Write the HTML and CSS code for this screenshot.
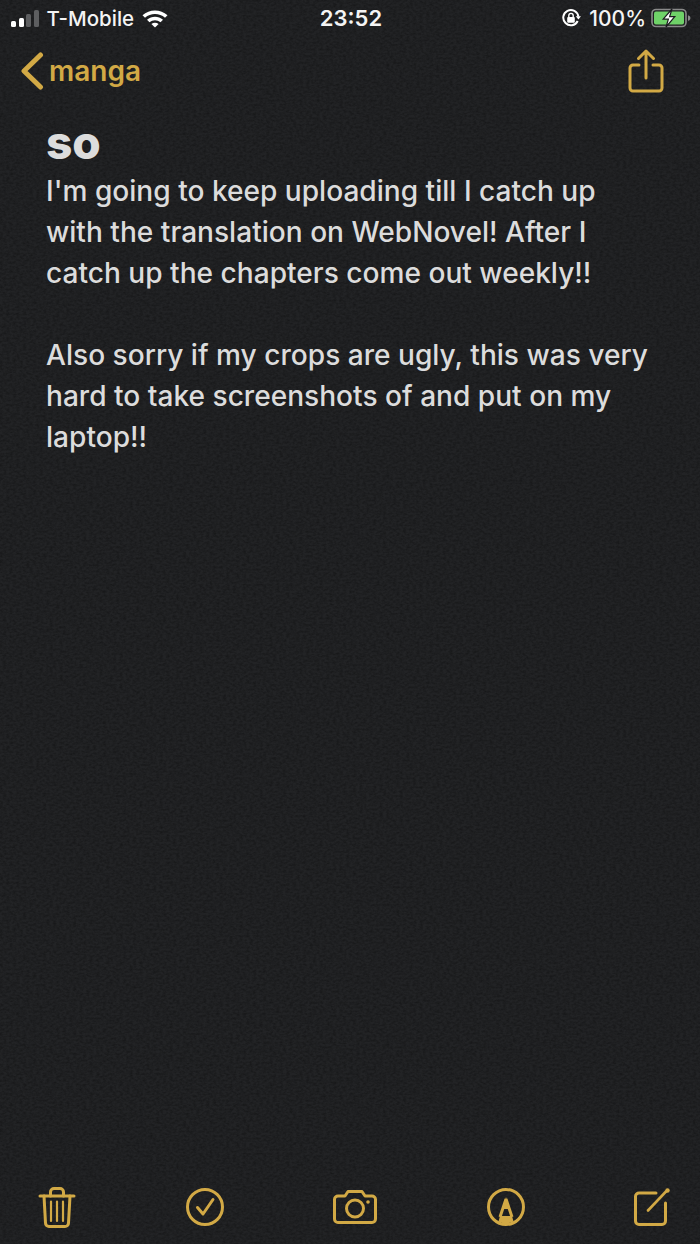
FILE: index.html
```html
<!DOCTYPE html>
<html lang="en">

<head>
	<meta charset="UTF-8">
	<title>so</title>
	<link rel="stylesheet" href="styles.css">
</head>

<body>
	<!-- paper grain behind everything -->
	<svg class="grain" width="700" height="1244" aria-hidden="true">
		<filter id="paper">
			<feTurbulence type="fractalNoise" baseFrequency="0.3 0.45" numOctaves="3" seed="4"/>
			<feColorMatrix type="matrix" values="0 0 0 0 0  0 0 0 0 0  0 0 0 0 0  0.55 0 0 0 -0.17"/>
		</filter>
		<rect width="700" height="1244" filter="url(#paper)"/>
	</svg>

	<div class="phone">
		<!-- status bar -->
		<header class="status">
			<div class="status-left">
				<div class="signal">
					<i class="bar bar1"></i>
					<i class="bar bar2"></i>
					<i class="bar bar3 off"></i>
					<i class="bar bar4 off"></i>
				</div>
				<span class="carrier">T-Mobile</span>
				<svg class="wifi" width="28" height="20" viewBox="0 0 28 20">
					<path d="M1.5 7.2C8.4 .9 19.6 .9 26.5 7.2L24 9.8C18.4 4.8 9.6 4.8 4 9.8Z" fill="#fff"/>
					<path d="M6 11.7C10.7 7.6 17.3 7.6 22 11.7L19.5 14.2C16.2 11.5 11.8 11.5 8.5 14.2Z" fill="#fff"/>
					<path d="M10.4 16C12.6 14.4 15.4 14.4 17.6 16L14 19.6Z" fill="#fff"/>
				</svg>
			</div>
			<div class="clock">23:52</div>
			<div class="status-right">
				<svg class="lock" width="20" height="20" viewBox="0 0 20 20">
					<path d="M16.7 13A7.6 7.6 0 1 1 17.4 8.6" fill="none" stroke="#fff" stroke-width="2"/>
					<path d="M14.8 8.2H20L17.4 11.4Z" fill="#fff"/>
					<rect x="6.2" y="9" width="7.6" height="5.8" rx="1" fill="#fff"/>
					<path d="M7.8 9V7.6A2.2 2.2 0 0 1 12.2 7.6V9" fill="none" stroke="#fff" stroke-width="1.4"/>
				</svg>
				<span class="percent">100%</span>
				<svg class="battery" width="40" height="20" viewBox="0 0 40 20">
					<rect x="1" y="1.500" width="34" height="17" rx="4" fill="none" stroke="#8a8a8a" stroke-width="1.6"/>
					<rect x="3" y="3.500" width="30" height="13" rx="2" fill="#6fd268"/>
					<path d="M37 7.200C38.600 7.600 39.400 8.600 39.400 10S38.600 12.400 37 12.800Z" fill="#8a8a8a"/>
					<path d="M21 1 12.200 11.200H17.400L15 19 23.800 8.600H18.600Z" fill="#fff" stroke="#1c1d1f" stroke-width="1.2"/>
				</svg>
			</div>
		</header>

		<!-- nav bar -->
		<nav class="nav">
			<a class="back" href="#">
				<svg width="24" height="38" viewBox="0 0 24 38">
					<path d="M20.5 3 4 19 20.5 35" fill="none" stroke="#d2a945" stroke-width="5" stroke-linecap="round" stroke-linejoin="round"/>
				</svg>
				<span>manga</span>
			</a>
			<svg class="share" width="36" height="44" viewBox="0 0 36 44">
				<path d="M11 16H5A3 3 0 0 0 2 19V39A3 3 0 0 0 5 42H31A3 3 0 0 0 34 39V19A3 3 0 0 0 31 16H25" fill="none" stroke="#d2a945" stroke-width="3" stroke-linecap="round"/>
				<path d="M18 29V2.500M10.500 9.500 18 2 25.500 9.500" fill="none" stroke="#d2a945" stroke-width="3" stroke-linecap="round" stroke-linejoin="round"/>
			</svg>
		</nav>

		<!-- note -->
		<main class="note">
			<h1>so</h1>
			<p>I'm going to keep uploading till I catch up<br>with the translation on WebNovel! After I<br>catch up the chapters come out weekly!!</p>
			<p>Also sorry if my crops are ugly, this was very<br>hard to take screenshots of and put on my<br>laptop!!</p>
		</main>

		<!-- bottom toolbar -->
		<footer class="toolbar">
			<svg width="38" height="42" viewBox="0 0 38 42" fill="none" stroke="#d2a945" stroke-width="3" stroke-linecap="round" stroke-linejoin="round">
				<path d="M2 10H36"/>
				<path d="M12.500 10V6A3.500 3.500 0 0 1 16 2.500H22A3.500 3.500 0 0 1 25.500 6V10"/>
				<path d="M6 10 7.500 37A3.500 3.500 0 0 0 11 40.500H27A3.500 3.500 0 0 0 30.500 37L32 10"/>
				<path d="M13 15.500V35M19 15.500V35M25 15.500V35" stroke-width="2.200"/>
			</svg>
			<svg width="38" height="38" viewBox="0 0 38 38" fill="none" stroke="#d2a945" stroke-width="3" stroke-linecap="round" stroke-linejoin="round">
				<circle cx="19" cy="19" r="17.500"/>
				<path d="M11.500 19.500 17 26 27 11.500"/>
			</svg>
			<svg width="44" height="36" viewBox="0 0 44 36" fill="none" stroke="#d2a945" stroke-width="3" stroke-linejoin="round">
				<path d="M5 7H12L15 2.500H29L32 7H39A3.500 3.500 0 0 1 42.500 10.500V30A3.500 3.500 0 0 1 39 33.500H5A3.500 3.500 0 0 1 1.500 30V10.500A3.500 3.500 0 0 1 5 7Z"/>
				<circle cx="22" cy="19.500" r="8.500"/>
				<circle cx="35" cy="13" r="1.800" fill="#d2a945" stroke="none"/>
			</svg>
			<svg width="38" height="38" viewBox="0 0 38 38" fill="none" stroke="#d2a945" stroke-width="3" stroke-linejoin="round">
				<circle cx="19" cy="19" r="17.500"/>
				<path d="M19 11 13 29M19 11 25 29"/>
				<path d="M19 9 23 21H15Z" fill="#d2a945" stroke="none"/>
				<path d="M13 28H25L26.500 33.500A17 17 0 0 1 11.500 33.500Z" fill="#d2a945" stroke="none"/>
			</svg>
			<svg width="36" height="38" viewBox="0 0 36 38" fill="none" stroke="#d2a945" stroke-width="3" stroke-linecap="round" stroke-linejoin="round">
				<path d="M22 5H5A3.500 3.500 0 0 0 1.500 8.500V33A3.500 3.500 0 0 0 5 36.500H28A3.500 3.500 0 0 0 31.500 33V15"/>
				<path d="M14 22.500 32 3.500" stroke-width="2.600"/>
				<circle cx="33.500" cy="2.500" r="2.200" fill="#d2a945" stroke="none"/>
			</svg>
		</footer>
	</div>
</body>

</html>
```

FILE: styles.css
```css
* {
	margin: 0;
	padding: 0;
	box-sizing: border-box;
}

html,
body {
	width: 700px;
	height: 1244px;
	overflow: hidden;
}

body {
	background-color: #222325;
	font-family: Inter, "Liberation Sans", sans-serif;
	position: relative;
}

/* texture sits under the page */
.grain {
	position: absolute;
	top: 0;
	left: 0;
}

.phone {
	position: relative;
	height: 100%;
	display: flex;
	flex-direction: column;
}

/* status bar */
.status {
	height: 36px;
	padding: 0 9px 0 11px;
	display: grid;
	grid-template-columns: 1fr auto 1fr;
	align-items: center;
	color: #f4f4f4;
}

.status-left {
	display: flex;
	align-items: center;
}

.signal {
	display: flex;
	align-items: flex-end;
	gap: 2.500px;
	height: 18px;
}

.bar {
	width: 5px;
	border-radius: 1.500px;
	background-color: #fff;
}

.bar1 {
	height: 6px;
}

.bar2 {
	height: 9px;
}

.bar3 {
	height: 13px;
}

.bar4 {
	height: 17px;
}

.bar.off {
	background-color: #5d5e60;
}

.carrier {
	font-size: 20.500px;
	font-weight: 500;
	margin-left: 8px;
}

.wifi {
	margin-left: 7px;
}

.clock {
	font-size: 22px;
	font-weight: 600;
}

.status-right {
	display: flex;
	align-items: center;
	justify-content: flex-end;
}

.percent {
	font-size: 21px;
	font-weight: 500;
	margin: 0 5px 0 8px;
}

/* nav bar */
.nav {
	height: 70px;
	padding: 0 36px 0 20px;
	display: flex;
	justify-content: space-between;
	align-items: center;
}

.back {
	display: flex;
	align-items: center;
	gap: 5px;
	color: #d2a945;
	text-decoration: none;
	font-size: 28px;
	font-weight: 600;
}

/* note */
.note {
	flex: 1;
	padding: 14px 40px 0 46px;
	color: #dcdcdc;
}

.note h1 {
	font-size: 46px;
	line-height: 44px;
	font-weight: 800;
	margin-bottom: 7px;
}

.note p {
	font-size: 28.100px;
	font-weight: 500;
	line-height: 41px;
	margin-bottom: 41px;
	white-space: nowrap;
}

/* bottom toolbar */
.toolbar {
	height: 74px;
	padding: 0 30px 0 38px;
	display: flex;
	justify-content: space-between;
	align-items: center;
}
```
